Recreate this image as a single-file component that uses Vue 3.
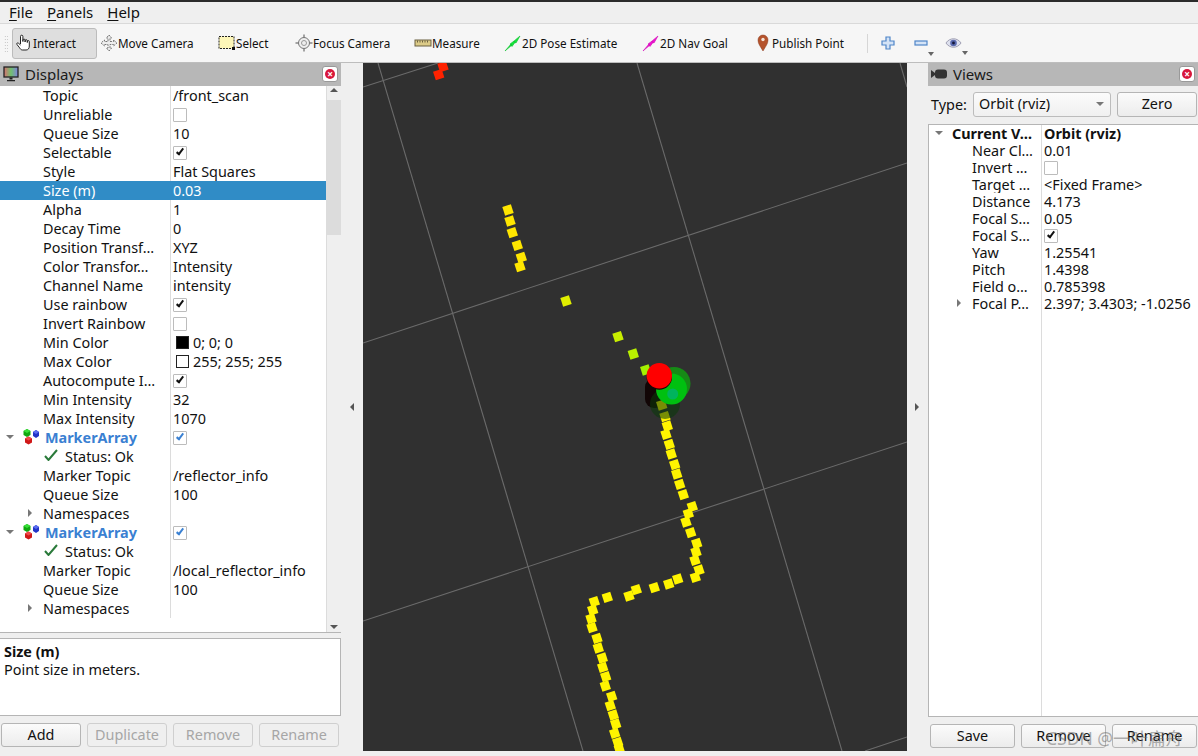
<script setup>
const tools = [
  { label: 'Interact', icon: 'hand', width: 85, active: true },
  { label: 'Move Camera', icon: 'move', width: 118 },
  { label: 'Select', icon: 'select', width: 77 },
  { label: 'Focus Camera', icon: 'focus', width: 119 },
  { label: 'Measure', icon: 'ruler', width: 90 },
  { label: '2D Pose Estimate', icon: 'pose', width: 138 },
  { label: '2D Nav Goal', icon: 'nav', width: 112 },
  { label: 'Publish Point', icon: 'pin', width: 100 }
]

const displayRows = [
  { name: 'Topic', value: '/front_scan' },
  { name: 'Unreliable', check: 'off' },
  { name: 'Queue Size', value: '10' },
  { name: 'Selectable', check: 'on' },
  { name: 'Style', value: 'Flat Squares' },
  { name: 'Size (m)', value: '0.03', selected: true },
  { name: 'Alpha', value: '1' },
  { name: 'Decay Time', value: '0' },
  { name: 'Position Transf…', value: 'XYZ' },
  { name: 'Color Transfor…', value: 'Intensity' },
  { name: 'Channel Name', value: 'intensity' },
  { name: 'Use rainbow', check: 'on' },
  { name: 'Invert Rainbow', check: 'off' },
  { name: 'Min Color', value: '0; 0; 0', swatch: '#000' },
  { name: 'Max Color', value: '255; 255; 255', swatch: '#fff' },
  { name: 'Autocompute I…', check: 'on' },
  { name: 'Min Intensity', value: '32' },
  { name: 'Max Intensity', value: '1070' },
  { name: 'MarkerArray', check: 'blue', marker: true },
  { name: 'Status: Ok', status: true },
  { name: 'Marker Topic', value: '/reflector_info' },
  { name: 'Queue Size', value: '100' },
  { name: 'Namespaces', closed: true },
  { name: 'MarkerArray', check: 'blue', marker: true },
  { name: 'Status: Ok', status: true },
  { name: 'Marker Topic', value: '/local_reflector_info' },
  { name: 'Queue Size', value: '100' },
  { name: 'Namespaces', closed: true }
]

const viewRows = [
  { name: 'Current V…', value: 'Orbit (rviz)', bold: true, open: true },
  { name: 'Near Cl…', value: '0.01' },
  { name: 'Invert …', check: 'off' },
  { name: 'Target …', value: '<Fixed Frame>' },
  { name: 'Distance', value: '4.173' },
  { name: 'Focal S…', value: '0.05' },
  { name: 'Focal S…', check: 'on' },
  { name: 'Yaw', value: '1.25541' },
  { name: 'Pitch', value: '1.4398' },
  { name: 'Field o…', value: '0.785398' },
  { name: 'Focal P…', value: '2.397; 3.4303; -1.0256', closed: true }
]

const gridLines = [
  [378, 63, 583, 751],
  [637, 63, 842, 751],
  [900, 63, 907, 87],
  [363, 87, 438, 63],
  [363, 343, 907, 163],
  [363, 621, 907, 442],
  [865, 751, 907, 737]
]

const red = [[443, 66.7], [438.7, 74.7]]
const amber = [[508, 210], [510, 221], [512.3, 232.7], [517.3, 245.3], [521.3, 257.3], [520, 266.7]]
const lime = [[566, 301], [618, 336.7], [633.3, 354], [645.7, 370]]
const yellow = [
  [661.7, 405], [665, 416.7], [667.3, 426], [666, 434.3], [669.3, 444.3], [671.3, 454],
  [674.7, 464.7], [676.7, 474], [679.7, 484.3], [683.3, 494.7], [692.3, 506.7], [688.3, 513.7],
  [686, 522], [690.7, 532.7], [696.7, 543.3], [696, 552], [695, 560.3], [699, 570],
  [695.3, 577.3], [677.7, 579], [668.7, 584], [654.3, 587.7], [636.3, 589.7], [629, 596],
  [607.3, 597.3], [594.3, 601.7], [592.7, 610], [591, 618.7], [592, 627.7], [597, 638.3],
  [598.3, 648], [602.3, 658], [602.7, 667.3], [605.7, 676.7], [605.3, 686], [611.7, 696.3],
  [610.3, 705.7], [613.3, 715], [615.7, 724], [614.7, 733.3], [617.7, 742.3], [619.3, 749]
]

const scanPoints = [
  ...red.map(p => [...p, '#ff2200']),
  ...amber.map(p => [...p, '#ffe600']),
  ...lime.map((p, i) => [...p, ['#e0ee00', '#c8ee00', '#b8f000', '#a4f000'][i]]),
  ...yellow.map(p => [...p, '#fff400'])
]
</script>

<template>
  <div class="rviz">
    <div class="menubar">
      <span class="menu"><u>F</u>ile</span>
      <span class="menu"><u>P</u>anels</span>
      <span class="menu"><u>H</u>elp</span>
    </div>

    <div class="toolbar">
      <div class="grip"></div>
      <div
        v-for="tool in tools"
        :key="tool.label"
        class="tool"
        :class="{ active: tool.active }"
        :style="{ width: tool.width + 'px' }"
      >
        <svg class="tool-icon" viewBox="0 0 18 18">
          <template v-if="tool.icon === 'hand'">
            <path d="M5.5 10V2.4a1.2 1.2 0 0 1 2.4 0V7.5V6.2a1.1 1.1 0 0 1 2.2 0V8V6.8a1.1 1.1 0 0 1 2.2 0V8.5V7.6a1 1 0 0 1 2 0V12c0 2.5-1.2 4-3.2 4H7.5C6 16 5.4 15 4.6 13.8L2 10.5c-.8-1.2.6-2.2 1.6-1.2L5.5 11" fill="#fff" stroke="#222" stroke-width="1" />
          </template>
          <template v-else-if="tool.icon === 'move'">
            <path d="M9 1l2.6 3H10v3.5h3.5V6L17 9l-3.5 3v-1.500H10V14h1.600L9 17l-2.600-3H8v-3.500H4.500V12L1 9l3.500-3v1.500H8V4H6.400z" fill="#eee" stroke="#777" stroke-width="1" stroke-dasharray="2 1" />
          </template>
          <template v-else-if="tool.icon === 'select'">
            <rect x="1" y="2.500" width="15" height="12" fill="#fdf6b8" stroke="#222" stroke-dasharray="2 1" />
            <rect x="14" y="13" width="3" height="3" fill="#111" />
          </template>
          <template v-else-if="tool.icon === 'focus'">
            <path d="M9 .5v17M.5 9h17" stroke="#888" stroke-width="1.500" />
            <circle cx="9" cy="9" r="5.500" fill="#eee" stroke="#777" />
            <circle cx="9" cy="9" r="2.500" fill="none" stroke="#999" />
          </template>
          <template v-else-if="tool.icon === 'ruler'">
            <rect x="1" y="6" width="16" height="6" fill="#dccb88" stroke="#6a6040" />
            <path d="M3.500 6.500v2M6 6.500v2M8.500 6.500v2M11 6.500v2M13.500 6.500v2" stroke="#6a6040" />
          </template>
          <template v-else-if="tool.icon === 'pose'">
            <path d="M1 17L7 10l1 1zM10 7l6-5-4 7-2-1z M6 10l4-3 1 1.500-3 4z" fill="#12e83a" stroke="#10c030" stroke-width=".6" />
          </template>
          <template v-else-if="tool.icon === 'nav'">
            <path d="M1 17L7 10l1 1zM10 7l6-5-4 7-2-1z M6 10l4-3 1 1.500-3 4z" fill="#f010d0" stroke="#d010b8" stroke-width=".6" />
          </template>
          <template v-else>
            <path d="M9 17C6.500 12.500 4 10 4 6a5 5 0 0 1 10 0c0 4-2.500 6.500-5 11z" fill="#b5532c" stroke="#8a3d20" stroke-width=".5" />
            <circle cx="9" cy="5.500" r="1.700" fill="#f4e4d8" />
          </template>
        </svg>
        <span>{{ tool.label }}</span>
      </div>

      <div class="tool-sep"></div>

      <svg class="small-icon plus" viewBox="0 0 14 14">
        <path d="M5 1h4v4h4v4H9v4H5V9H1V5h4z" fill="#d4e3f6" stroke="#4f85c8" stroke-width="1.200" />
      </svg>
      <div class="small-tool minus-tool">
        <svg class="small-icon" viewBox="0 0 14 14">
          <rect x="1" y="5" width="12" height="4" fill="#d4e3f6" stroke="#4f85c8" stroke-width="1.200" />
        </svg>
        <i class="mini-arrow"></i>
      </div>
      <div class="small-tool eye-tool">
        <svg class="eye" viewBox="0 0 18 12">
          <path d="M1 6c4-6 12-6 16 0-4 6-12 6-16 0z" fill="#dde0ee" stroke="#9a9aae" />
          <circle cx="9" cy="6" r="3.500" fill="#5a6ab0" />
          <circle cx="9" cy="6" r="1.500" fill="#15183a" />
        </svg>
        <i class="mini-arrow"></i>
      </div>
    </div>

    <div class="workspace">
      <aside class="dock left-dock">
        <header class="dock-title">
          <svg class="title-icon" viewBox="0 0 16 16">
            <defs>
              <linearGradient id="screenFill" x1="0" x2="1" y1="0" y2="0">
                <stop offset="0" stop-color="#d87070" />
                <stop offset=".5" stop-color="#70c070" />
                <stop offset="1" stop-color="#8080e0" />
              </linearGradient>
            </defs>
            <rect x="1" y="1" width="14" height="10" fill="url(#screenFill)" stroke="#222" stroke-width="1.300" />
            <path d="M6.500 11.500h3v2h-3zM4 14h8v1.200H4z" fill="#222" />
          </svg>
          <span>Displays</span>
          <span class="close-btn"><i>×</i></span>
        </header>

        <div class="tree-wrap">
          <div class="tree">
            <div
              v-for="(row, i) in displayRows"
              :key="i"
              class="row"
              :class="{ selected: row.selected }"
            >
              <div class="name-cell">
                <template v-if="row.marker">
                  <i class="arrow-down marker-arrow"></i>
                  <svg class="cubes" viewBox="0 0 18 18">
                    <path d="M1.500 3l3.500-2 3.500 2v4L5 9 1.500 7z" fill="#10a810" />
                    <path d="M1.500 3L5 1l3.500 2L5 5z" fill="#38e038" />
                    <path d="M11 4l3-2 3 2v4l-3 2-3-2z" fill="#2234c8" />
                    <path d="M11 4l3-2 3 2-3 2z" fill="#5a6cf0" />
                    <path d="M3 10.500L6.500 8.500l3.500 2v4l-3.500 2L3 14.500z" fill="#d01818" />
                    <path d="M3 10.500L6.500 8.500l3.500 2-3.500 2z" fill="#f04a4a" />
                  </svg>
                  <span class="marker-name">{{ row.name }}</span>
                </template>
                <template v-else-if="row.status">
                  <svg class="status-check" viewBox="0 0 14 12">
                    <path d="M1 7l3.500 4L13 1" fill="none" stroke="#2a7a3a" stroke-width="2" />
                  </svg>
                  <span>{{ row.name }}</span>
                </template>
                <template v-else>
                  <i v-if="row.closed" class="arrow-right"></i>
                  <span>{{ row.name }}</span>
                </template>
              </div>
              <div class="value-cell">
                <span v-if="row.swatch" class="swatch" :style="{ background: row.swatch }"></span>
                <span v-if="row.value">{{ row.value }}</span>
                <span v-if="row.check" class="checkbox" :class="row.check"></span>
              </div>
            </div>
          </div>

          <div class="scrollbar">
            <i class="scroll-up"></i>
            <div class="thumb"></div>
            <i class="scroll-down"></i>
          </div>
        </div>

        <div class="h-handle"></div>

        <div class="description">
          <b>Size (m)</b>
          <span>Point size in meters.</span>
        </div>

        <div class="buttons">
          <button class="btn">Add</button>
          <button class="btn" disabled>Duplicate</button>
          <button class="btn" disabled>Remove</button>
          <button class="btn" disabled>Rename</button>
        </div>
      </aside>

      <div class="splitter"><i class="split-left"></i></div>

      <main class="viewport">
        <svg class="scene" viewBox="363 63 544 688">
          <line
            v-for="(l, i) in gridLines"
            :key="i"
            :x1="l[0]" :y1="l[1]" :x2="l[2]" :y2="l[3]"
            stroke="#6a6a6a"
            stroke-width="1.100"
          />
          <rect x="645" y="378" width="20" height="30" rx="9" fill="#120606" />
          <rect
            v-for="(p, i) in scanPoints"
            :key="'p' + i"
            :x="p[0] - 4.5" :y="p[1] - 4.5"
            width="9" height="9"
            :fill="p[2]"
            :transform="`rotate(-18 ${p[0]} ${p[1]})`"
          />
          <circle cx="665" cy="404" r="15" fill="#0a3a0a" opacity=".55" />
          <circle cx="674" cy="383.500" r="16.500" fill="#168a16" />
          <circle cx="671.500" cy="389" r="15.500" fill="#00c010" />
          <circle cx="672.700" cy="394" r="5.500" fill="#00b070" opacity=".8" />
          <circle cx="659.300" cy="377" r="12.700" fill="#1a0505" />
          <circle cx="659.300" cy="375.700" r="12.700" fill="#ff0000" />
        </svg>
      </main>

      <div class="splitter right-split"><i class="split-right"></i></div>

      <aside class="dock right-dock">
        <header class="dock-title">
          <svg class="title-icon cam" viewBox="0 0 16 10">
            <path d="M0 1l4 3V6l-4 3z" fill="#333" />
            <rect x="4" y="0.500" width="12" height="9" rx="3" fill="#333" />
          </svg>
          <span>Views</span>
          <span class="close-btn"><i>×</i></span>
        </header>

        <div class="type-row">
          <label>Type:</label>
          <div class="combo">Orbit (rviz)<i class="arrow-down combo-arrow"></i></div>
          <button class="btn zero">Zero</button>
        </div>

        <div class="view-tree">
          <div class="view-sep"></div>
          <div v-for="(row, i) in viewRows" :key="i" class="view-row" :class="{ bold: row.bold }">
            <div class="view-name">
              <i v-if="row.open" class="arrow-down view-open"></i>
              <i v-if="row.closed" class="arrow-right view-closed"></i>
              <span>{{ row.name }}</span>
            </div>
            <div class="view-value">
              <span v-if="row.value">{{ row.value }}</span>
              <span v-if="row.check" class="checkbox" :class="row.check"></span>
            </div>
          </div>
        </div>

        <div class="buttons right-buttons">
          <button class="btn">Save</button>
          <button class="btn">Remove</button>
          <button class="btn">Rename</button>
        </div>
        <div class="watermark">CSDN @一叶扁舟</div>
      </aside>
    </div>
  </div>
</template>

<style>
html, body { margin: 0; background: #efefef; }
</style>

<style scoped>
.rviz {
  width: 1198px;
  height: 756px;
  overflow: hidden;
  display: flex;
  flex-direction: column;
  background: #efefef;
  color: #111;
  font-family: "Noto Sans", "Noto Sans CJK SC", sans-serif;
  font-size: 14.4px;
  box-sizing: border-box;
  border-top: 2px solid #2b2b2b;
}

.menubar {
  height: 22px;
  flex: none;
  display: flex;
  align-items: center;
  box-sizing: border-box;
  padding-left: 9px;
  padding-bottom: 2px;
  gap: 14px;
  background: #efefef;
  border-bottom: 1px solid #d9d9d9;
}

.menu { font-size: 15px; }
.menu u { text-underline-offset: 2px; }

.toolbar {
  height: 39px;
  flex: none;
  display: flex;
  align-items: center;
  background: #f6f6f6;
  border-bottom: 1px solid #bdbdbd;
  box-sizing: border-box;
  font-size: 11.7px;
  padding-left: 4px;
}

.grip {
  width: 4px;
  height: 17px;
  margin-right: 4px;
  background-image: radial-gradient(#bbb 0.7px, transparent 0.8px);
  background-size: 2.5px 3px;
}

.tool {
  height: 31px;
  display: flex;
  align-items: center;
  padding-left: 2px;
  box-sizing: border-box;
  flex: none;
  white-space: nowrap;
}

.tool.active {
  background: #dedede;
  border: 1px solid #bcbcbc;
  border-radius: 3px;
  padding-left: 2px;
  margin-right: 1px;
}

.tool-icon { width: 18px; height: 18px; flex: none; }

.tool-sep {
  width: 1px;
  height: 19px;
  background: #d6d6d6;
  margin-left: 15px;
  margin-right: 13px;
}

.small-icon { width: 14px; height: 14px; display: block; }
.plus { flex: none; }

.small-tool { position: relative; flex: none; }
.minus-tool { margin-left: 19px; }
.eye-tool { margin-left: 17px; }
.eye { width: 17px; height: 12px; display: block; }

.mini-arrow {
  position: absolute;
  right: -6px;
  bottom: -9px;
  border: 3px solid transparent;
  border-top: 4px solid #666;
}

.workspace {
  flex: 1;
  min-height: 0;
  display: flex;
}

.dock {
  flex: none;
  display: flex;
  flex-direction: column;
  position: relative;
}

.left-dock { width: 341px; }
.right-dock { width: 270px; }

.dock-title {
  height: 23px;
  flex: none;
  box-sizing: border-box;
  display: flex;
  align-items: center;
  background: #b7b7b7;
  padding-left: 3px;
  padding-bottom: 2px;
  gap: 6px;
  font-size: 15px;
  color: #1a1a1a;
}

.title-icon { width: 16px; height: 16px; flex: none; }
.cam { height: 10px; }

.close-btn {
  margin-left: auto;
  margin-right: 3px;
  width: 16px;
  height: 16px;
  background: #fff;
  border: 1px solid #999;
  border-radius: 3px;
  box-sizing: border-box;
  display: flex;
  align-items: center;
  justify-content: center;
}

.close-btn i {
  width: 10px;
  height: 10px;
  border-radius: 50%;
  background: #d8173c;
  color: #fff;
  font-size: 10px;
  font-style: normal;
  font-weight: 700;
  line-height: 10px;
  text-align: center;
}

.tree-wrap {
  height: 547px;
  flex: none;
  box-sizing: border-box;
  display: flex;
  background: #fff;
  border-bottom: 1px solid #b5b5b5;
  overflow: hidden;
}

.tree { flex: 1; min-width: 0; }

.row {
  height: 19px;
  display: flex;
  line-height: 19px;
}

.row.selected {
  background: #308cc6;
  color: #fff;
}

.name-cell {
  width: 170px;
  flex: none;
  box-sizing: border-box;
  padding-left: 43px;
  position: relative;
  white-space: nowrap;
  overflow: hidden;
}

.value-cell {
  flex: 1;
  border-left: 1px solid #dcdcdc;
  padding-left: 2px;
  display: flex;
  align-items: center;
  white-space: nowrap;
}

.row.selected .value-cell { border-left-color: transparent; }

.marker-name {
  position: absolute;
  left: 45px;
  font-weight: 700;
  color: #3a80d2;
}

.cubes {
  position: absolute;
  left: 22px;
  top: 0;
  width: 18px;
  height: 18px;
}

.arrow-down {
  position: absolute;
  width: 0;
  height: 0;
  border: 4px solid transparent;
  border-top: 4px solid #777;
  border-bottom: 0;
}

.marker-arrow { left: 6px; top: 7px; }

.arrow-right {
  position: absolute;
  left: 28px;
  top: 5px;
  width: 0;
  height: 0;
  border: 4px solid transparent;
  border-left: 4px solid #777;
  border-right: 0;
}

.status-check {
  position: absolute;
  left: 44px;
  top: 2px;
  width: 14px;
  height: 12px;
}

.row:has(.status-check) .name-cell { padding-left: 65px; }

.checkbox {
  width: 14px;
  height: 14px;
  border: 1px solid #bcbcbc;
  background: #fff;
  border-radius: 1px;
  box-sizing: border-box;
  position: relative;
  display: inline-block;
}

.checkbox.on::after,
.checkbox.blue::after {
  content: "";
  position: absolute;
  left: 3.5px;
  top: 0.5px;
  width: 4px;
  height: 8px;
  box-sizing: border-box;
  border: solid #111;
  border-width: 0 2px 2px 0;
  transform: rotate(38deg);
}

.checkbox.blue::after { border-color: #3a80d2; }

.swatch {
  width: 13px;
  height: 13px;
  box-sizing: border-box;
  border: 1px solid #222;
  margin-left: 3px;
  margin-right: 4px;
  flex: none;
}

.scrollbar {
  width: 15px;
  flex: none;
  background: #efefef;
  border-left: 1px solid #dcdcdc;
  position: relative;
  box-sizing: border-box;
}

.thumb {
  position: absolute;
  top: 14px;
  left: 0;
  right: 0;
  height: 135px;
  background: #dcdcdc;
}

.scroll-up, .scroll-down {
  position: absolute;
  left: 3px;
  width: 0;
  height: 0;
  border: 4px solid transparent;
}

.scroll-up { top: 2px; border-bottom: 4px solid #555; border-top: 0; }
.scroll-down { bottom: 3px; border-top: 4px solid #555; border-bottom: 0; }

.h-handle {
  height: 5px;
  flex: none;
}

.description {
  height: 78px;
  flex: none;
  box-sizing: border-box;
  background: #fff;
  border: 1px solid #b5b5b5;
  border-left: 0;
  display: flex;
  flex-direction: column;
  padding: 4px 4px;
  line-height: 18px;
}

.buttons {
  display: flex;
  gap: 6px;
  padding: 7px 2px 0 1px;
}

.btn {
  flex: 1;
  width: 80px;
  height: 24px;
  padding: 0;
  border: 1px solid #b5b5b5;
  border-radius: 3px;
  background: linear-gradient(#fbfbfb, #ececec);
  font-family: inherit;
  font-size: 14.4px;
  line-height: 20px;
  color: #111;
}

.btn:disabled {
  color: #a6a6a6;
  border-color: #cfcfcf;
  background: #efefef;
}

.splitter {
  width: 22px;
  flex: none;
  position: relative;
}

.right-split { width: 21px; }

.split-left, .split-right {
  position: absolute;
  top: 340px;
  width: 0;
  height: 0;
  border: 4px solid transparent;
}

.split-left { left: 9px; border-right: 4px solid #555; border-left: 0; }
.split-right { left: 8px; border-left: 4px solid #555; border-right: 0; }

.viewport {
  flex: 1;
  min-width: 0;
  height: 688px;
  background: #303030;
}

.scene { display: block; width: 100%; height: 100%; }

.type-row {
  display: flex;
  align-items: center;
  height: 38px;
  flex: none;
  box-sizing: border-box;
  padding: 0 1px 2px 3px;
}

.type-row label { width: 42px; flex: none; }

.combo {
  width: 138px;
  height: 25px;
  box-sizing: border-box;
  border: 1px solid #bcbcbc;
  border-radius: 3px;
  background: linear-gradient(#fbfbfb, #f0f0f0);
  padding-left: 5px;
  line-height: 22px;
  position: relative;
  flex: none;
}

.combo-arrow { right: 6px; top: 9px; }

.zero {
  flex: none;
  width: 80px;
  height: 25px;
  margin-left: 6px;
}

.view-tree {
  height: 593px;
  flex: none;
  box-sizing: border-box;
  background: #fff;
  border: 1px solid #b5b5b5;
  border-right: 0;
  position: relative;
}

.view-sep {
  position: absolute;
  left: 112px;
  top: 0;
  bottom: 0;
  width: 1px;
  background: #dcdcdc;
}

.view-row {
  height: 17px;
  line-height: 17px;
  display: flex;
}

.view-row.bold { font-weight: 700; }

.view-name {
  width: 113px;
  flex: none;
  box-sizing: border-box;
  padding-left: 43px;
  position: relative;
  white-space: nowrap;
  overflow: hidden;
}

.view-row.bold .view-name { padding-left: 23px; }

.view-open { left: 6px; top: 6px; }
.view-closed { left: 28px; top: 4px; }

.view-value {
  flex: 1;
  padding-left: 2px;
  display: flex;
  align-items: center;
  white-space: nowrap;
}

.right-buttons {
  padding: 7px 1px 0 2px;
}

.watermark {
  position: absolute;
  left: 118px;
  top: 662px;
  color: rgba(110, 110, 110, 0.55);
  font-size: 17.5px;
  white-space: nowrap;
  pointer-events: none;
}
</style>
